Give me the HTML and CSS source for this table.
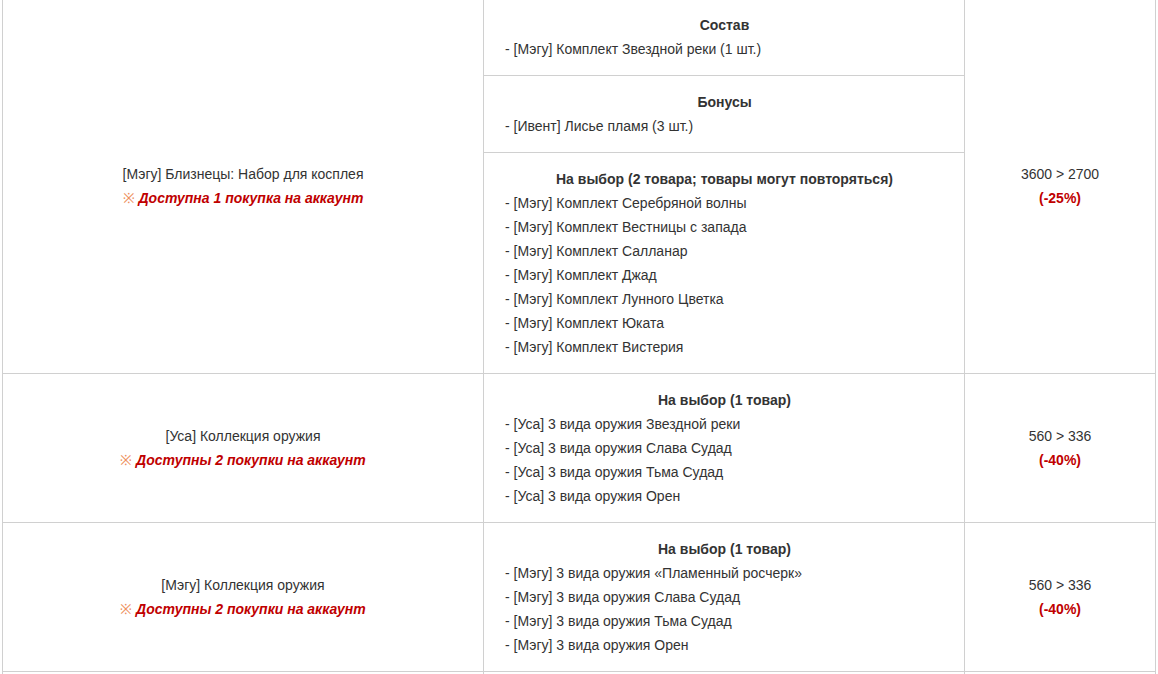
FILE: index.html
```html
<!DOCTYPE html>
<html lang="ru">
<head>
<meta charset="utf-8">
<link rel="stylesheet" href="styles.css">
</head>
<body>
<table class="shop">
  <colgroup>
    <col class="c-name">
    <col class="c-items">
    <col class="c-price">
  </colgroup>
  <tbody>
    <tr>
      <td class="name">
        <div>[Мэгу] Близнецы: Набор для косплея</div>
        <div class="limit"><span class="mark">※</span> Доступна 1 покупка на аккаунт</div>
      </td>
      <td class="items">
        <div class="sec">
          <div class="head">Состав</div>
          <div>- [Мэгу] Комплект Звездной реки (1 шт.)</div>
        </div>
        <div class="sec">
          <div class="head">Бонусы</div>
          <div>- [Ивент] Лисье пламя (3 шт.)</div>
        </div>
        <div class="sec">
          <div class="head">На выбор (2 товара; товары могут повторяться)</div>
          <div>- [Мэгу] Комплект Серебряной волны</div>
          <div>- [Мэгу] Комплект Вестницы с запада</div>
          <div>- [Мэгу] Комплект Салланар</div>
          <div>- [Мэгу] Комплект Джад</div>
          <div>- [Мэгу] Комплект Лунного Цветка</div>
          <div>- [Мэгу] Комплект Юката</div>
          <div>- [Мэгу] Комплект Вистерия</div>
        </div>
      </td>
      <td class="price">
        <div>3600 &gt; 2700</div>
        <div class="off">(-25%)</div>
      </td>
    </tr>
    <tr>
      <td class="name">
        <div>[Уса] Коллекция оружия</div>
        <div class="limit"><span class="mark">※</span> Доступны 2 покупки на аккаунт</div>
      </td>
      <td class="items">
        <div class="sec">
          <div class="head">На выбор (1 товар)</div>
          <div>- [Уса] 3 вида оружия Звездной реки</div>
          <div>- [Уса] 3 вида оружия Слава Судад</div>
          <div>- [Уса] 3 вида оружия Тьма Судад</div>
          <div>- [Уса] 3 вида оружия Орен</div>
        </div>
      </td>
      <td class="price">
        <div>560 &gt; 336</div>
        <div class="off">(-40%)</div>
      </td>
    </tr>
    <tr>
      <td class="name">
        <div>[Мэгу] Коллекция оружия</div>
        <div class="limit"><span class="mark">※</span> Доступны 2 покупки на аккаунт</div>
      </td>
      <td class="items">
        <div class="sec">
          <div class="head">На выбор (1 товар)</div>
          <div>- [Мэгу] 3 вида оружия «Пламенный росчерк»</div>
          <div>- [Мэгу] 3 вида оружия Слава Судад</div>
          <div>- [Мэгу] 3 вида оружия Тьма Судад</div>
          <div>- [Мэгу] 3 вида оружия Орен</div>
        </div>
      </td>
      <td class="price">
        <div>560 &gt; 336</div>
        <div class="off">(-40%)</div>
      </td>
    </tr>
    <tr>
      <td class="name">&nbsp;</td>
      <td class="items"><div class="sec">&nbsp;</div></td>
      <td class="price">&nbsp;</td>
    </tr>
  </tbody>
</table>
</body>
</html>
```

FILE: styles.css
```css
html, body {
  margin: 0;
  padding: 0;
  background: #fff;
}
body {
  font-family: "Liberation Sans", Arial, sans-serif;
  font-size: 14px;
  line-height: 24px;
  color: #333;
  overflow: hidden;
}
.shop {
  border-collapse: collapse;
  table-layout: fixed;
  width: 1153px;
  margin: -2px 0 0 2px;
}
.c-name { width: 481px; }
.c-items { width: 481px; }
.c-price { width: 191px; }
.shop td {
  border: 1px solid #d0d0d0;
  padding: 0;
  vertical-align: middle;
}
.name, .price {
  text-align: center;
}
.limit {
  color: #c00000;
  font-weight: bold;
  font-style: italic;
}
.mark {
  color: #ee9060;
  font-weight: normal;
  font-style: normal;
}
.off {
  color: #c00000;
  font-weight: bold;
}
.sec {
  padding: 14px 20px 14px 21px;
  border-bottom: 1px solid #d0d0d0;
}
.sec:last-child {
  border-bottom: none;
}
.head {
  font-weight: bold;
  text-align: center;
}
```
